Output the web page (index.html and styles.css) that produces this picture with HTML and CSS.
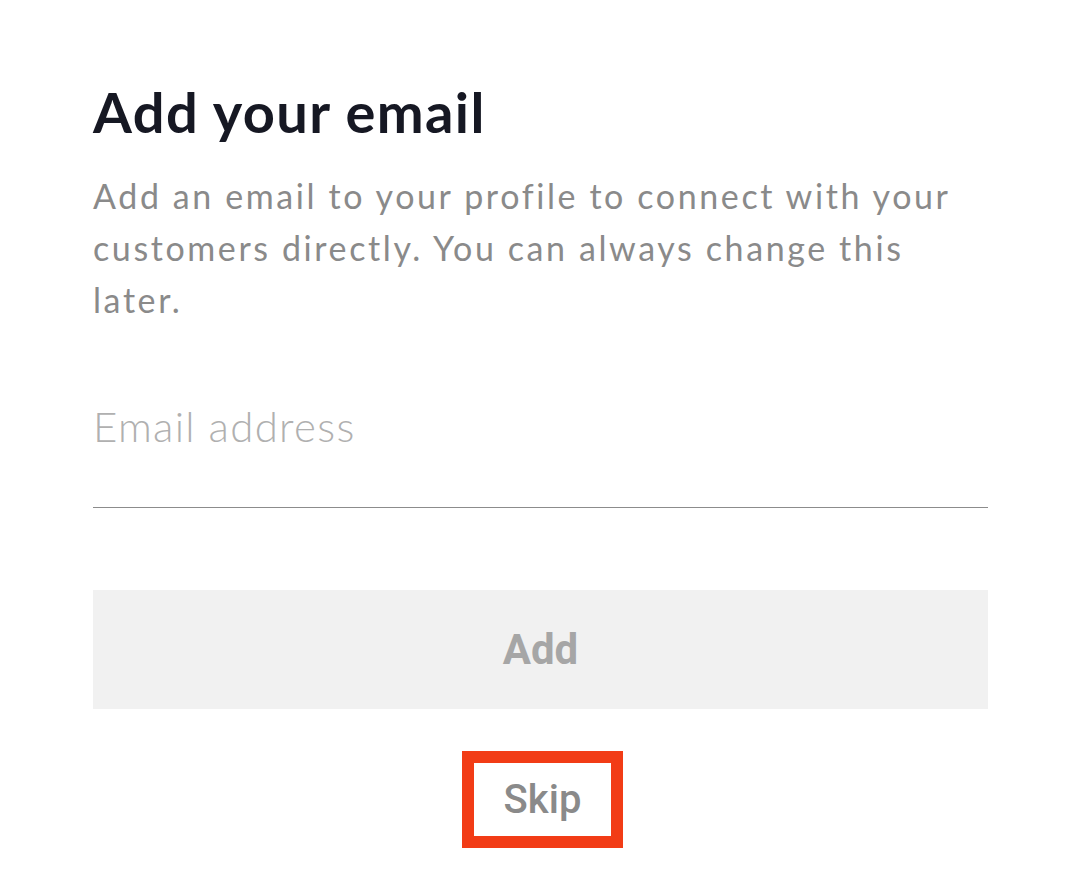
FILE: index.html
```html
<!DOCTYPE html>
<html lang="en">
<head>
  <meta charset="UTF-8">
  <meta name="viewport" content="width=device-width, initial-scale=1.0">
  <title>Add your email</title>
  <link rel="stylesheet" href="styles.css">
</head>
<body>
  <div class="email-container">
    <h1>Add your email</h1>
    <p class="hint">Add an email to your profile to connect with your customers directly. You can always change this later.</p>
    <form id="email-form">
      <input type="email" placeholder="Email address" id="email" class="email-input">
      <button type="submit" class="add-btn" disabled>Add</button>
      <div class="skip-row">
        <a href="#" class="skip-link">Skip</a>
      </div>
    </form>
  </div>
</body>
</html>
```

FILE: styles.css
```css
body {
  margin: 0;
  background-color: #ffffff;
  font-family: "Lato", "Noto Sans", sans-serif;
}

.email-container {
  width: 895px;
  padding: 78px 0 0 93px;
}

.email-container h1 {
  margin: 0;
  font-size: 56px;
  line-height: 1.2;
  font-weight: 700;
  letter-spacing: 1.4px;
  color: #161823;
}

.hint {
  margin: 25px 0 0;
  font-size: 34px;
  line-height: 52px;
  letter-spacing: 2.6px;
  color: #8a8a8a;
}

#email-form {
  display: flex;
  flex-direction: column;
}

.email-input {
  margin-top: 75px;
  padding: 0 0 56px;
  height: 50px;
  border: none;
  border-bottom: 1px solid #8c8c8c;
  font-family: "Lato", "Noto Sans", sans-serif;
  font-size: 42px;
  font-weight: 300;
  letter-spacing: 1.3px;
  color: #161823;
  outline: none;
}

.email-input::placeholder {
  color: #b0b0b0;
}

.add-btn {
  margin-top: 82px;
  height: 119px;
  border: none;
  background-color: #f1f1f1;
  font-family: "Roboto", sans-serif;
  font-size: 42px;
  font-weight: 700;
  color: #a6a6a6;
}

.skip-row {
  display: flex;
  justify-content: center;
  margin-top: 42px;
  padding-left: 4px;
}

.skip-link {
  display: flex;
  justify-content: center;
  align-items: center;
  width: 137px;
  height: 73px;
  border: 12px solid #f23c16;
  font-family: "Roboto", sans-serif;
  font-size: 40px;
  font-weight: 500;
  color: #8a8a8a;
  text-decoration: none;
}
```
